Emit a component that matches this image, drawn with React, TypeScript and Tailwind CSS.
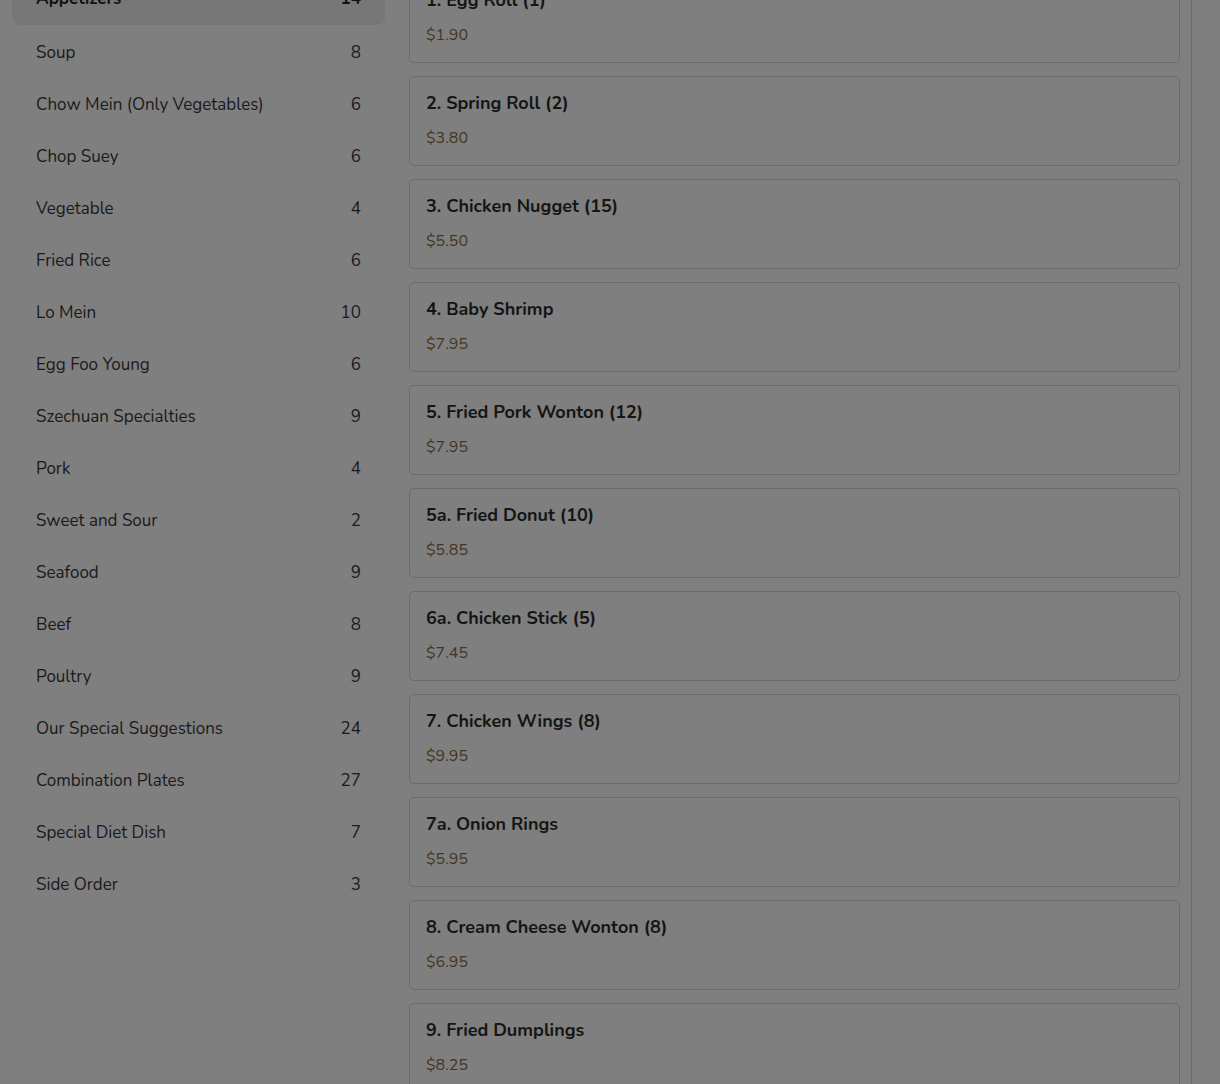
import React from 'react';

const categories = [
  { name: 'Appetizers', count: 14 },
  { name: 'Soup', count: 8 },
  { name: 'Chow Mein (Only Vegetables)', count: 6 },
  { name: 'Chop Suey', count: 6 },
  { name: 'Vegetable', count: 4 },
  { name: 'Fried Rice', count: 6 },
  { name: 'Lo Mein', count: 10 },
  { name: 'Egg Foo Young', count: 6 },
  { name: 'Szechuan Specialties', count: 9 },
  { name: 'Pork', count: 4 },
  { name: 'Sweet and Sour', count: 2 },
  { name: 'Seafood', count: 9 },
  { name: 'Beef', count: 8 },
  { name: 'Poultry', count: 9 },
  { name: 'Our Special Suggestions', count: 24 },
  { name: 'Combination Plates', count: 27 },
  { name: 'Special Diet Dish', count: 7 },
  { name: 'Side Order', count: 3 },
];

const items = [
  { name: '1. Egg Roll (1)', price: '$1.90' },
  { name: '2. Spring Roll (2)', price: '$3.80' },
  { name: '3. Chicken Nugget (15)', price: '$5.50' },
  { name: '4. Baby Shrimp', price: '$7.95' },
  { name: '5. Fried Pork Wonton (12)', price: '$7.95' },
  { name: '5a. Fried Donut (10)', price: '$5.85' },
  { name: '6a. Chicken Stick (5)', price: '$7.45' },
  { name: '7. Chicken Wings (8)', price: '$9.95' },
  { name: '7a. Onion Rings', price: '$5.95' },
  { name: '8. Cream Cheese Wonton (8)', price: '$6.95' },
  { name: '9. Fried Dumplings', price: '$8.25' },
];

export default function App() {
  return (
    <div
      className="w-[1220px] h-[1084px] overflow-hidden bg-[#7f7f7f]"
      style={{ fontFamily: '"Nunito", "Lato", "Open Sans", sans-serif' }}
    >
      <div className="flex gap-6 pl-3 mt-[-27px]">
        {/* Category sidebar */}
        <aside className="w-[373px] shrink-0 flex flex-col">
          {categories.map((c, i) => (
            <div
              key={c.name}
              className={`h-[52px] flex items-center justify-between px-6 rounded-lg text-[17px] ${
                i === 0 ? 'bg-[#777777] font-bold text-[#111111] mb-[2px]' : 'text-[#1a1a1a]'
              }`}
            >
              <span>{c.name}</span>
              <span>{c.count}</span>
            </div>
          ))}
        </aside>

        {/* Menu items */}
        <main className="w-[783px] pr-[11px] border-r border-[#6a6a6a] flex flex-col gap-[13px]">
          {items.map((it) => (
            <div
              key={it.name}
              className="h-[90px] border border-[#6b6b6b] rounded-[5px] px-4 pt-[14px] flex flex-col gap-[11px]"
            >
              <div className="h-6 leading-6 text-[18px] font-bold text-[#151515]">{it.name}</div>
              <div className="h-6 leading-6 text-[16px] text-[#43361f]">{it.price}</div>
            </div>
          ))}
        </main>
      </div>
    </div>
  );
}
